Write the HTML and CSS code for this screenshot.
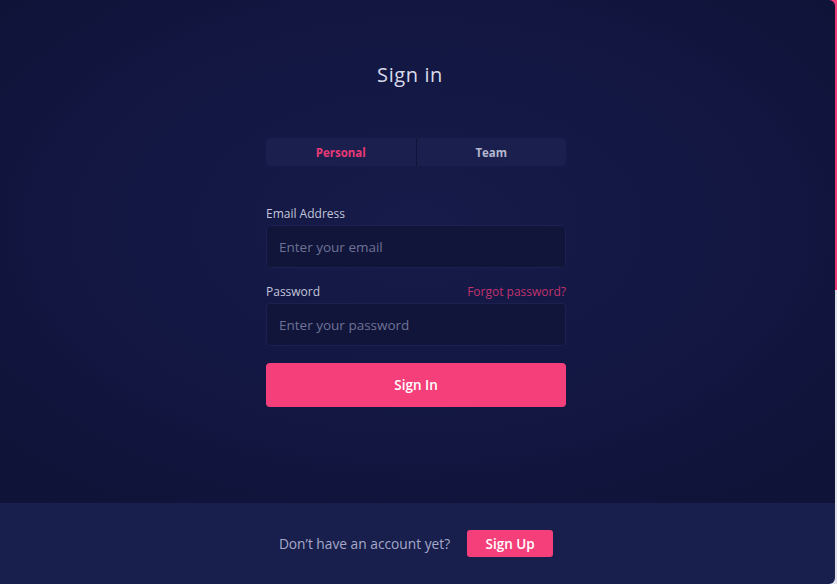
FILE: index.html
```html
<!DOCTYPE html>
<html lang="en">
<head>
<meta charset="utf-8">
<title>Sign in</title>
<link rel="stylesheet" href="styles.css">
</head>
<body>
<div class="frame">
  <div class="card">
    <main class="main">
      <h1 class="title">Sign in</h1>
      <div class="tabs">
        <button class="tab tab-active">Personal</button>
        <button class="tab">Team</button>
      </div>
      <form class="form">
        <label class="label" for="email">Email Address</label>
        <input class="input" id="email" type="email" placeholder="Enter your email">
        <div class="label-row">
          <label class="label" for="password">Password</label>
          <a class="forgot" href="#">Forgot password?</a>
        </div>
        <input class="input" id="password" type="password" placeholder="Enter your password">
        <button class="submit" type="button">Sign In</button>
      </form>
    </main>
    <footer class="footer">
      <span class="footer-text">Don’t have an account yet?</span>
      <button class="signup" type="button">Sign Up</button>
    </footer>
  </div>
</div>
</body>
</html>
```

FILE: styles.css
```css
* { box-sizing: border-box; }
html, body { margin: 0; padding: 0; }
body {
  width: 837px;
  height: 584px;
  overflow: hidden;
  background: linear-gradient(to bottom, #f03e7a 0, #f03e7a 290px, #dfe1ea 290px, #dfe1ea 100%);
  font-family: "Open Sans", "DejaVu Sans", sans-serif;
}
.frame {
  width: 835px;
  height: 584px;
}
.card {
  width: 835px;
  height: 584px;
  display: flex;
  flex-direction: column;
  border-radius: 0 6px 6px 0;
  overflow: hidden;
}
.main {
  flex: 1;
  background: radial-gradient(ellipse 70% 70% at 50% 45%, #161b49 0%, #121641 60%, #0f1337 100%);
  display: flex;
  flex-direction: column;
  align-items: center;
  padding-right: 3px;
}
.title {
  margin: 62px 12px 0 0;
  font-size: 20px;
  line-height: 26px;
  font-weight: 400;
  color: #d9dbea;
  letter-spacing: 0.6px;
}
.tabs {
  margin-top: 50px;
  width: 300px;
  height: 28px;
  display: flex;
  background: #1a1f4e;
  border-radius: 4px;
  overflow: hidden;
}
.tab {
  flex: 1;
  border: 0;
  background: transparent;
  font-family: inherit;
  font-size: 11.5px;
  font-weight: 700;
  color: #b4b7cf;
  padding: 0;
}
.tab + .tab { border-left: 1px solid #10143a; }
.tab-active { color: #e83a76; }
.form {
  width: 300px;
  margin-top: 40px;
  display: flex;
  flex-direction: column;
}
.label {
  font-size: 12px;
  line-height: 16px;
  color: #c3c6da;
}
.label-row {
  margin-top: 16px;
  display: flex;
  justify-content: space-between;
  align-items: center;
}
.forgot {
  font-size: 12px;
  line-height: 16px;
  color: #c0336d;
  text-decoration: none;
}
.input {
  margin-top: 3px;
  height: 43px;
  width: 300px;
  background: #11153a;
  border: 1px solid #1b2050;
  border-radius: 4px;
  padding: 0 12px;
  font-family: inherit;
  font-size: 13.5px;
  color: #d9dbea;
  outline: none;
}
.input::placeholder { color: #6e7296; }
.submit {
  margin-top: 17px;
  height: 44px;
  border: 0;
  border-radius: 4px;
  background: #f43f7b;
  color: #ffffff;
  font-family: inherit;
  font-size: 13.5px;
  font-weight: 600;
}
.footer {
  height: 81px;
  background: #181f4d;
  display: flex;
  align-items: center;
  justify-content: center;
  gap: 17px;
  padding-right: 3px;
}
.footer-text {
  font-size: 13.75px;
  color: #a6a9c8;
}
.signup {
  width: 86px;
  height: 27px;
  border: 0;
  border-radius: 3px;
  background: #f43f7b;
  color: #ffffff;
  font-family: inherit;
  font-size: 13.5px;
  font-weight: 600;
}
```
